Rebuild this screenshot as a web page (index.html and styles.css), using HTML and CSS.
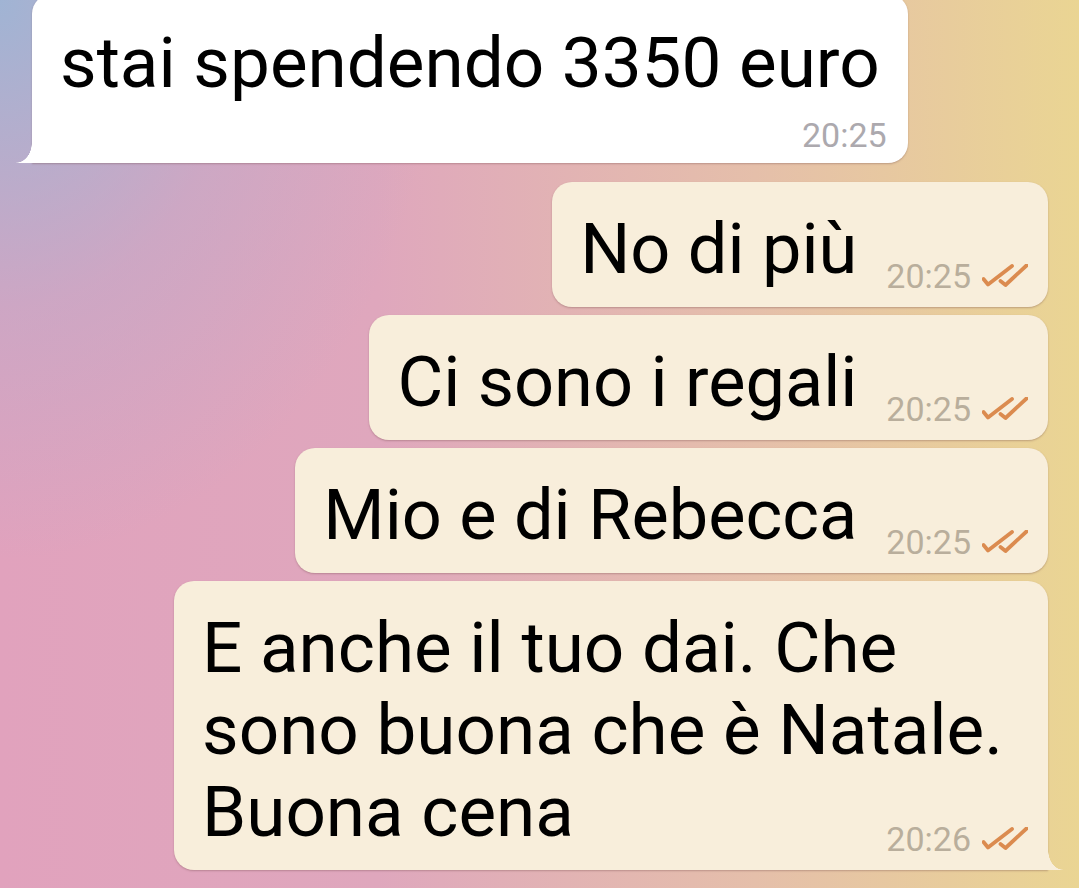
FILE: index.html
```html
<!DOCTYPE html>
<html lang="it">
<head>
    <meta charset="UTF-8">
    <meta name="viewport" content="width=device-width, initial-scale=1.0">
    <title>Chat</title>
    <link rel="stylesheet" href="styles.css">
</head>
<body>
    <div class="chat">
        <div class="bubble in">
            <div class="text">stai spendendo 3350 euro</div>
            <div class="meta"><span class="time">20:25</span></div>
        </div>

        <div class="bubble out">
            <div class="text">No di più</div>
            <div class="meta">
                <span class="time">20:25</span>
                <svg class="ticks" width="46" height="24" viewBox="0 0 46 24"><path d="M1.5 15 L6 20.5 L30 2 M18.5 17 L23.5 21 L44.5 1.5"/></svg>
            </div>
        </div>

        <div class="bubble out">
            <div class="text">Ci sono i regali</div>
            <div class="meta">
                <span class="time">20:25</span>
                <svg class="ticks" width="46" height="24" viewBox="0 0 46 24"><path d="M1.5 15 L6 20.5 L30 2 M18.5 17 L23.5 21 L44.5 1.5"/></svg>
            </div>
        </div>

        <div class="bubble out">
            <div class="text">Mio e di Rebecca</div>
            <div class="meta">
                <span class="time">20:25</span>
                <svg class="ticks" width="46" height="24" viewBox="0 0 46 24"><path d="M1.5 15 L6 20.5 L30 2 M18.5 17 L23.5 21 L44.5 1.5"/></svg>
            </div>
        </div>

        <div class="bubble out long">
            <div class="text">E anche il tuo dai. Che<br>sono buona che è Natale.</div>
            <div class="last-line">
                <div class="text">Buona cena</div>
                <div class="meta">
                    <span class="time">20:26</span>
                    <svg class="ticks" width="46" height="24" viewBox="0 0 46 24"><path d="M1.5 15 L6 20.5 L30 2 M18.5 17 L23.5 21 L44.5 1.5"/></svg>
                </div>
            </div>
        </div>
    </div>
</body>
</html>
```

FILE: styles.css
```css
html, body {
    margin: 0;
    height: 100%;
}

body {
    overflow: hidden;
    font-family: Roboto, "Liberation Sans", sans-serif;
    background:
        radial-gradient(ellipse 440px 560px at 0 0, rgba(160, 180, 212, 1), rgba(176, 172, 206, 0.4) 55%, rgba(160, 180, 212, 0)),
        linear-gradient(to right, #e1a2bd 0%, #dfa7bd 35%, #e5bfaa 70%, #ead593 100%);
}

.chat {
    display: flex;
    flex-direction: column;
    align-items: flex-start;
    gap: 8px;
    padding: 0 31px 0 32px;
    margin-top: -6px;
}

.bubble {
    position: relative;
    border-radius: 20px;
    box-shadow: 0 1px 2px rgba(110, 70, 70, 0.35);
}

.text {
    font-size: 71px;
    line-height: 82px;
    color: #000;
}

.meta {
    display: flex;
    align-items: center;
    gap: 11px;
    height: 40px;
}

.time {
    font-size: 34px;
    line-height: 40px;
}

/* incoming */
.in {
    display: flex;
    flex-direction: column;
    background: #fff;
    padding: 28px 21px 8px 28px;
    border-bottom-left-radius: 0;
    margin-bottom: 11px;
}

.in .text {
    margin-right: 7px;
}

.in .meta {
    align-self: flex-end;
    margin-top: 11px;
}

.in .time {
    color: #aca9ae;
}

.in::after {
    content: "";
    position: absolute;
    left: -16px;
    bottom: 0;
    width: 16px;
    height: 20px;
    background: radial-gradient(ellipse 16px 20px at 0 0, rgba(255, 255, 255, 0) 97%, #fff 100%);
}

/* outgoing */
.out {
    align-self: flex-end;
    display: flex;
    align-items: flex-end;
    box-sizing: border-box;
    background: #f8eedb;
    padding: 26px 20px 11px 28px;
}

.out .text {
    font-size: 70.3px;
    margin-bottom: 6px;
}

.out .meta {
    margin-left: 29px;
}

.out .time {
    color: #b9ae9c;
}

.ticks path {
    fill: none;
    stroke: #db8b4f;
    stroke-width: 3.8;
    stroke-linecap: round;
    stroke-linejoin: round;
}

.long {
    flex-direction: column;
    align-items: stretch;
    width: 874px;
    border-bottom-right-radius: 0;
}

.long .text {
    font-size: 71px;
}

.long > .text {
    margin-bottom: 0;
}

.last-line {
    display: flex;
    justify-content: space-between;
    align-items: flex-end;
}

.long::after {
    content: "";
    position: absolute;
    right: -15px;
    bottom: 0;
    width: 15px;
    height: 20px;
    background: radial-gradient(ellipse 15px 20px at 100% 0, rgba(248, 238, 219, 0) 97%, #f8eedb 100%);
}
```
